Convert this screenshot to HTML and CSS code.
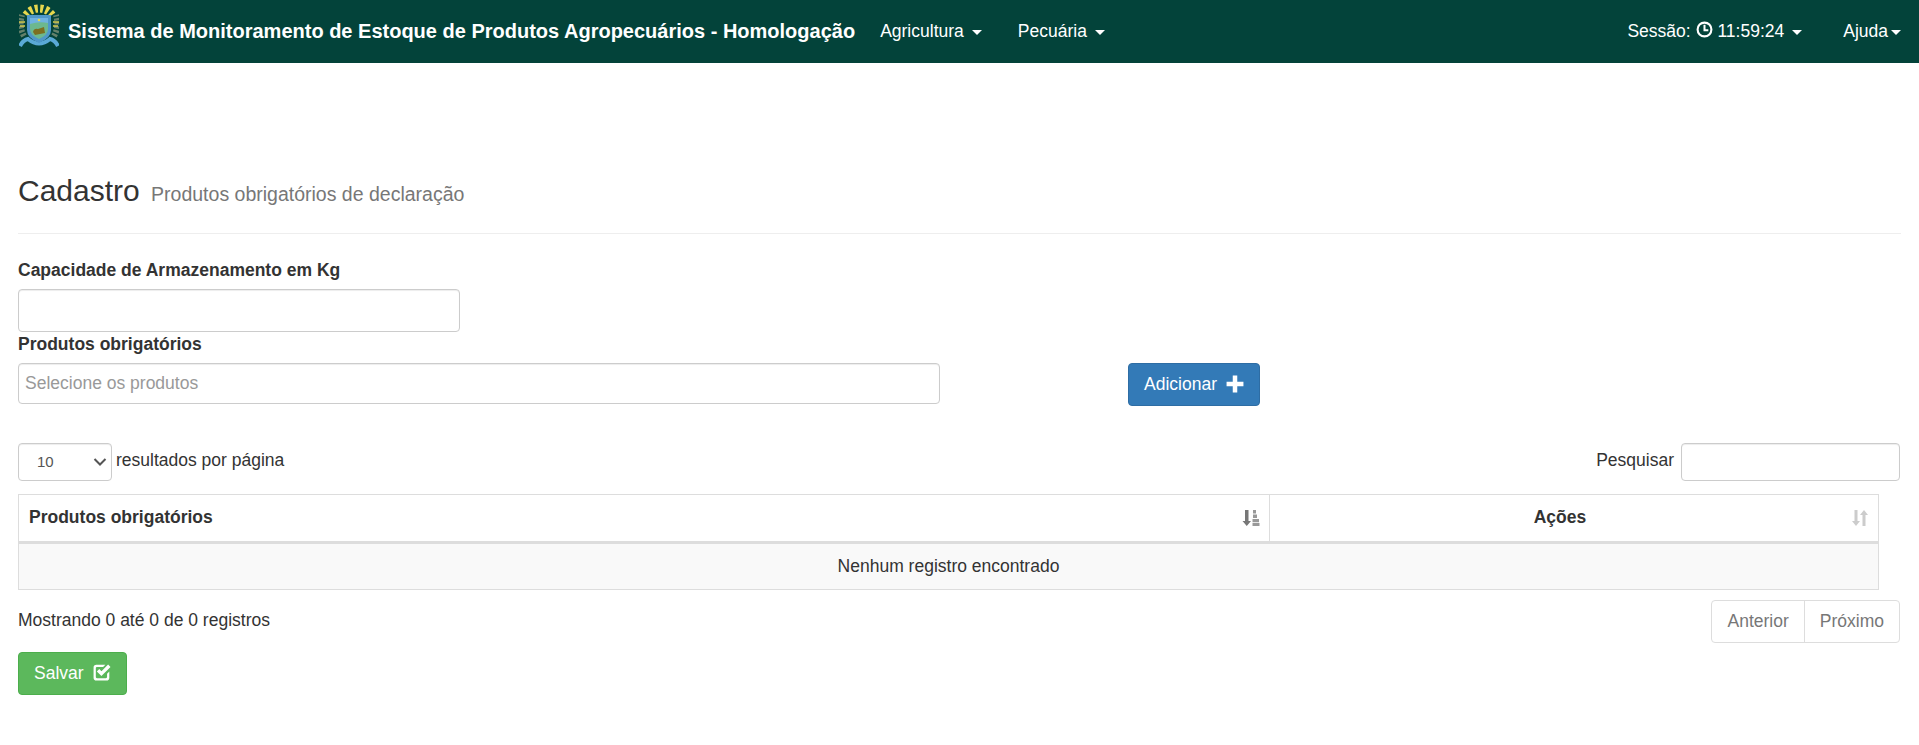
FILE: index.html
```html
<!DOCTYPE html>
<html lang="pt-BR">

<head>
    <meta charset="UTF-8">
    <meta name="viewport" content="width=device-width, initial-scale=1.0">
    <title>Sistema de Monitoramento de Estoque de Produtos Agropecuários</title>
    <link rel="stylesheet" href="styles.css">
</head>

<body>
    <header class="barra">
        <svg class="brasao" viewBox="0 0 40 44" aria-hidden="true">
            <g fill="none">
                <path d="M5 33 C1 26 1 19 3 12" stroke="#64806a" stroke-width="6" stroke-dasharray="2.5 1.5"/>
                <path d="M35 33 C39 26 39 19 37 12" stroke="#64806a" stroke-width="6" stroke-dasharray="2.5 1.5"/>
                <path d="M7 12 A15 13 0 0 1 33 12" stroke="#e6d84e" stroke-width="8" stroke-dasharray="3 2.4"/>
                <path d="M0 19 h6 M34 19 h6 M1 23 h5 M34 23 h5" stroke="#d8cc50" stroke-width="1.6"/>
                <path d="M1 43 Q4 37 9 36 Q20 45 31 36 Q36 37 39 43" stroke="#5aa9d6" stroke-width="4"/>
            </g>
            <path d="M8 12 H32 V27 Q32 35 20 40 Q8 35 8 27 Z" fill="#4f97c9"/>
            <path d="M11 15 H29 V26 Q29 32 20 36 Q11 32 11 26 Z" fill="#6cb88f"/>
            <path d="M11 15 H29 V20 Q20 18 11 21 Z" fill="#6fb2e0"/>
            <path d="M14 29 Q15 25 19 26 L25 24 L26 30 L16 32 Z" fill="#7d6f20"/>
            <circle cx="20" cy="17" r="1.3" fill="#e6d84e"/>
        </svg>
        <a href="#" class="marca">Sistema de Monitoramento de Estoque de Produtos Agropecuários - Homologação</a>
        <nav class="menu">
            <a href="#">Agricultura<span class="seta"></span></a>
            <a href="#">Pecuária<span class="seta"></span></a>
        </nav>
        <div class="menu menu-direita">
            <a href="#" class="sessao">Sessão:
                <svg class="relogio" viewBox="0 0 16 16" aria-hidden="true">
                    <circle cx="8" cy="8" r="6.5" fill="none" stroke="#fff" stroke-width="2"/>
                    <path d="M8 3.6 V8.6 H11.6" fill="none" stroke="#fff" stroke-width="1.9"/>
                </svg>
                11:59:24<span class="seta"></span></a>
            <a href="#" class="ajuda">Ajuda<span class="seta"></span></a>
        </div>
    </header>

    <main class="pagina">
        <div class="cabecalho">
            <h1>Cadastro <small>Produtos obrigatórios de declaração</small></h1>
        </div>

        <form>
            <label class="rotulo" for="capacidade">Capacidade de Armazenamento em Kg</label>
            <input type="text" id="capacidade" class="campo campo-capacidade">

            <label class="rotulo rotulo-produtos" for="produtos">Produtos obrigatórios</label>
            <div class="linha-produtos">
                <input type="text" id="produtos" class="campo campo-produtos" placeholder="Selecione os produtos">
                <button type="button" class="botao botao-azul">Adicionar
                    <svg class="icone" viewBox="0 0 16 16" aria-hidden="true">
                        <path d="M6 0.5 H10 V6 H15.5 V10 H10 V15.5 H6 V10 H0.5 V6 H6 Z" fill="#fff"/>
                    </svg>
                </button>
            </div>

            <div class="controles">
                <div class="tamanho">
                    <select class="campo seletor">
                        <option>10</option>
                        <option>25</option>
                        <option>50</option>
                    </select>
                    <span class="resultados">resultados por página</span>
                </div>
                <div class="pesquisa">
                    <label for="pesquisar">Pesquisar</label>
                    <input type="search" id="pesquisar" class="campo campo-pesquisa">
                </div>
            </div>

            <table class="tabela">
                <thead>
                    <tr>
                        <th class="col-produtos">Produtos obrigatórios
                            <svg class="ordem" viewBox="0 0 18 18" aria-hidden="true">
                                <path d="M3 1 H6.5 V12 H9 L4.75 17 L0.5 12 H3 Z" fill="#777"/>
                                <path d="M11 1 H14 V4.5 H11 Z M11 5.5 H15 V9 H11 Z M10.5 10 H17 V13.2 H10.5 Z M10.5 14 H17.5 V17 H10.5 Z" fill="#999"/>
                            </svg>
                        </th>
                        <th class="col-acoes">Ações
                            <svg class="ordem" viewBox="0 0 18 18" aria-hidden="true">
                                <path d="M3.5 1 H6.5 V12 H9 L5 17 L1 12 H3.5 Z" fill="#ccc"/>
                                <path d="M11.5 17 H14.5 V6 H17 L13 1 L9 6 H11.5 Z" fill="#ccc"/>
                            </svg>
                        </th>
                    </tr>
                </thead>
                <tbody>
                    <tr>
                        <td colspan="2">Nenhum registro encontrado</td>
                    </tr>
                </tbody>
            </table>

            <div class="rodape-tabela">
                <span class="info">Mostrando 0 até 0 de 0 registros</span>
                <div class="paginacao">
                    <a href="#">Anterior</a>
                    <a href="#">Próximo</a>
                </div>
            </div>

            <button type="submit" class="botao botao-verde">Salvar
                <svg class="icone icone-salvar" viewBox="0 0 16 16" aria-hidden="true">
                    <path d="M12.5 9.5 V12.5 Q12.5 13.5 11.5 13.5 H3.5 Q2.5 13.5 2.5 12.5 V4.5 Q2.5 3.5 3.5 3.5 H9 L11 1.5 H3 Q0.5 1.5 0.5 4 V13 Q0.5 15.5 3 15.5 H12 Q14.5 15.5 14.5 13 V7.5 Z" fill="#fff"/>
                    <path d="M4.5 6.5 L7.5 9.5 L14.5 2.5" fill="none" stroke="#fff" stroke-width="3"/>
                </svg>
            </button>
        </form>
    </main>
</body>

</html>
```

FILE: styles.css
```css
* {
    box-sizing: border-box;
}

body {
    margin: 0;
    font-family: "Liberation Sans", Arial, sans-serif;
    font-size: 17.5px;
    line-height: 1.42857;
    color: #333;
    background-color: #fff;
}

a {
    text-decoration: none;
}

/* barra de cima */
.barra {
    display: flex;
    align-items: center;
    height: 63px;
    padding: 0 18px 0 19px;
    background-color: #03433a;
}

.brasao {
    width: 40px;
    height: 44px;
    margin-top: -13px;
    flex-shrink: 0;
}

.marca {
    margin-left: 9px;
    font-size: 20px;
    font-weight: bold;
    color: #fff;
    white-space: nowrap;
}

.menu {
    display: flex;
    align-items: center;
    margin-left: 25px;
    gap: 36px;
}

.menu a {
    color: #fff;
    white-space: nowrap;
}

.menu-direita {
    margin-left: auto;
    gap: 41px;
}

.seta {
    display: inline-block;
    margin-left: 8px;
    vertical-align: middle;
    border-top: 5px solid #fff;
    border-left: 5px solid transparent;
    border-right: 5px solid transparent;
}

.ajuda .seta {
    margin-left: 3px;
}

.relogio {
    width: 17px;
    height: 17px;
    vertical-align: -1px;
}

/* conteudo */
.pagina {
    padding: 0 18px;
}

.cabecalho {
    margin-top: 111px;
    padding-bottom: 22px;
    border-bottom: 1px solid #eee;
}

h1 {
    margin: 0;
    font-size: 30px;
    font-weight: normal;
    line-height: 33px;
}

h1 small {
    margin-left: 3px;
    font-size: 19.5px;
    color: #777;
}

.rotulo {
    display: block;
    margin-top: 24px;
    margin-bottom: 6px;
    font-weight: bold;
}

.rotulo-produtos {
    margin-top: 0;
}

.campo {
    display: block;
    height: 43px;
    padding: 6px;
    font-family: inherit;
    font-size: 17.5px;
    color: #555;
    background-color: #fff;
    border: 1px solid #ccc;
    border-radius: 4px;
    box-shadow: inset 0 1px 1px rgba(0, 0, 0, .075);
}

.campo::placeholder {
    color: #999;
}

.campo-capacidade {
    width: 442px;
}

.linha-produtos {
    display: flex;
    align-items: flex-start;
}

.campo-produtos {
    width: 922px;
    height: 41px;
}

.botao {
    display: inline-flex;
    align-items: center;
    gap: 9px;
    height: 43px;
    padding: 0 15px;
    font-family: inherit;
    font-size: 17.5px;
    color: #fff;
    border: 1px solid transparent;
    border-radius: 4px;
}

.icone {
    width: 18px;
    height: 18px;
}

.icone-salvar {
    margin-top: -3px;
}

.botao-azul {
    margin-left: 188px;
    background-color: #337ab7;
    border-color: #2e6da4;
}

.botao-verde {
    margin-top: 9px;
    background-color: #5cb85c;
    border-color: #4cae4c;
}

/* tabela */
.controles {
    display: flex;
    justify-content: space-between;
    align-items: center;
    margin-top: 37px;
}

.tamanho,
.pesquisa {
    display: flex;
    align-items: center;
}

.seletor {
    width: 94px;
    height: 38px;
    padding: 0 18px;
    font-size: 15px;
    appearance: none;
    background: #fff url("data:image/svg+xml,%3Csvg xmlns='http://www.w3.org/2000/svg' width='14' height='10'%3E%3Cpath d='M1.5 2 L7 7.5 L12.5 2' fill='none' stroke='%23555' stroke-width='2'/%3E%3C/svg%3E") no-repeat right 4px center;
}

.resultados {
    margin-left: 4px;
    margin-top: -3px;
}

.pesquisa label {
    margin-top: -3px;
    margin-right: 7px;
}

.campo-pesquisa {
    width: 219px;
    height: 38px;
    margin-right: 1px;
}

.tabela {
    width: 1861px;
    margin-top: 13px;
    border-collapse: collapse;
    table-layout: fixed;
}

.tabela th,
.tabela td {
    border: 1px solid #ddd;
}

.tabela th {
    position: relative;
    height: 48px;
    padding: 0 10px;
    border-bottom-width: 3px;
}

.col-produtos {
    width: 1251px;
    text-align: left;
}

.tabela th.col-acoes {
    padding-right: 38px;
    text-align: center;
}

.ordem {
    position: absolute;
    top: 14px;
    right: 9px;
    width: 18px;
    height: 18px;
}

.tabela td {
    height: 47px;
    text-align: center;
    background-color: #f9f9f9;
}

.rodape-tabela {
    display: flex;
    justify-content: space-between;
    align-items: flex-start;
    margin-top: 10px;
}

.info {
    margin-top: 8px;
}

.paginacao {
    display: flex;
    height: 43px;
    margin-right: 1px;
    border: 1px solid #ddd;
    border-radius: 4px;
}

.paginacao a {
    display: flex;
    align-items: center;
    padding: 0 15px;
    color: #777;
}

.paginacao a:first-child {
    padding-left: 16px;
}

.paginacao a + a {
    border-left: 1px solid #ddd;
}
```
